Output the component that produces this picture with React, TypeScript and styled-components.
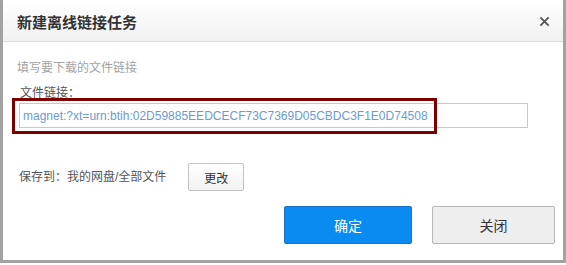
import React from "react";
import styled, { createGlobalStyle } from "styled-components";

const GlobalStyle = createGlobalStyle`
  html, body {
    margin: 0;
    padding: 0;
    background: #ffffff;
  }
  body {
    font-family: "Liberation Sans", "Noto Sans CJK SC", sans-serif;
    font-size: 12px;
    color: #555;
  }
`;

const App = () => {
  return (
    <>
      <GlobalStyle />
      <Dialog>
        <Header>
          <Title>新建离线链接任务</Title>
          <CloseIcon viewBox="0 0 12 12" aria-label="关闭">
            <path d="M1.5 1.5 L10.5 10.5 M10.5 1.5 L1.5 10.5" />
          </CloseIcon>
        </Header>
        <Body>
          <Hint>填写要下载的文件链接</Hint>
          <Label>文件链接：</Label>
          <LinkInput
            readOnly
            value="magnet:?xt=urn:btih:02D59885EEDCECF73C7369D05CBDC3F1E0D74508"
          />
          <SaveRow>
            <SavePath>保存到：我的网盘/全部文件</SavePath>
            <SmallButton>更改</SmallButton>
          </SaveRow>
          <Footer>
            <ActionButton primary>确定</ActionButton>
            <ActionButton>关闭</ActionButton>
          </Footer>
        </Body>
        <Highlight />
      </Dialog>
    </>
  );
};

const Dialog = styled.div`
  position: relative;
  width: 566px;
  height: 263px;
  box-sizing: border-box;
  background: #fff;
  border-left: 3px solid #a2a2a2;
  border-right: 3px solid #a2a2a2;
  border-bottom: 3px solid #a2a2a2;
  display: flex;
  flex-direction: column;
`;

const Header = styled.div`
  height: 41px;
  border-bottom: 1px solid #dcdcdc;
  background: linear-gradient(#ffffff, #f1f1f1);
  display: flex;
  align-items: center;
  justify-content: space-between;
  padding: 0 13px 0 14px;
`;

const Title = styled.h1`
  margin: 0;
  font-family: "Noto Sans CJK SC", sans-serif;
  font-size: 15px;
  font-weight: 700;
  color: #333;
  line-height: 20px;
  padding-top: 2px;
`;

const CloseIcon = styled.svg`
  width: 11px;
  height: 11px;
  margin-top: 2px;
  fill: none;
  stroke: #555;
  stroke-width: 2;
`;

const Body = styled.div`
  flex: 1;
  display: flex;
  flex-direction: column;
  padding: 17px 8px 0 14px;
`;

const Hint = styled.div`
  font-family: "Noto Sans CJK SC", sans-serif;
  color: #a3a3a3;
  line-height: 16px;
`;

const Label = styled.div`
  font-family: "Noto Sans CJK SC", sans-serif;
  color: #555;
  line-height: 16px;
  margin: 9px 0 0 3px;
`;

const LinkInput = styled.input`
  box-sizing: border-box;
  width: 509px;
  height: 25px;
  margin: 3px 0 0 2px;
  padding: 0 3px;
  border: 1px solid #c9c9c9;
  outline: none;
  font-family: "Liberation Sans", sans-serif;
  font-size: 12px;
  color: #6b9bd2;
  background: #fff;
`;

const SaveRow = styled.div`
  display: flex;
  align-items: center;
  gap: 22px;
  margin: 35px 0 0 2px;
`;

const SavePath = styled.span`
  font-family: "Liberation Sans", "Noto Sans CJK SC", sans-serif;
  color: #555;
  line-height: 16px;
`;

const SmallButton = styled.button`
  box-sizing: border-box;
  width: 56px;
  height: 28px;
  border: 1px solid #c3c3c3;
  border-radius: 2px;
  background: linear-gradient(#ffffff, #f3f3f3);
  font-family: "Noto Sans CJK SC", sans-serif;
  font-size: 12px;
  color: #333;
  padding: 0;
`;

const Footer = styled.div`
  display: flex;
  justify-content: flex-end;
  gap: 20px;
  margin-top: 15px;
`;

const ActionButton = styled.button<{ primary?: boolean }>`
  box-sizing: border-box;
  width: ${(p) => (p.primary ? "128px" : "123px")};
  height: 38px;
  border-radius: 2px;
  border: 1px solid ${(p) => (p.primary ? "#1a72cc" : "#b6b6b6")};
  background: ${(p) => (p.primary ? "#0a8bf2" : "#eeeeee")};
  color: ${(p) => (p.primary ? "#ffffff" : "#333333")};
  font-family: "Noto Sans CJK SC", sans-serif;
  font-size: 14px;
  padding: 0;
`;

const Highlight = styled.div`
  position: absolute;
  left: 9px;
  top: 98px;
  width: 425px;
  height: 36px;
  box-sizing: border-box;
  border: 3px solid #7d0000;
  pointer-events: none;
`;

export default App;
